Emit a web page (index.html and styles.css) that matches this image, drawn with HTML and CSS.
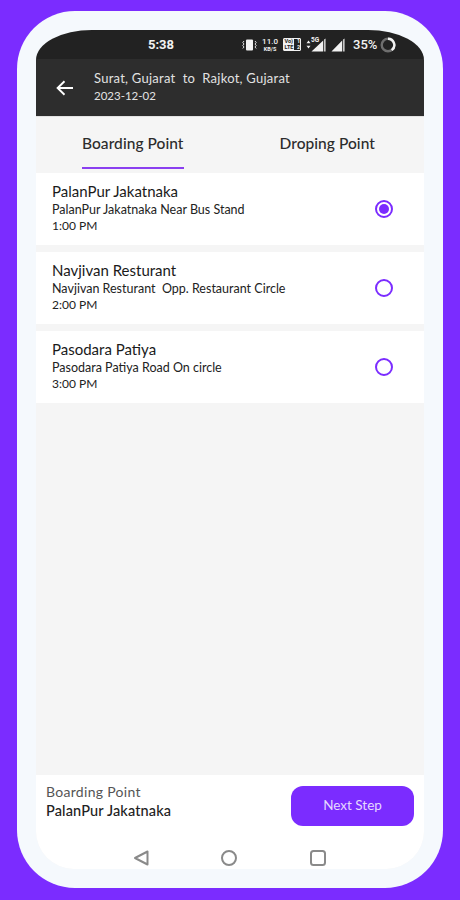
FILE: index.html
```html
<!DOCTYPE html>
<html lang="en">
<head>
    <meta charset="UTF-8">
    <meta name="viewport" content="width=device-width, initial-scale=1.0">
    <title>Boarding Point</title>
    <link rel="stylesheet" href="styles.css">
</head>
<body>
    <div class="phone">
        <div class="screen">
            <div class="status-bar">
                <span class="clock">5:38</span>
                <div class="status-icons">
                    <svg class="vibrate" width="15" height="12" viewBox="0 0 15 12">
                        <rect x="4" y="0.5" width="7" height="11" rx="1" fill="#f2f2f2"/>
                        <path d="M2 2 L0.8 3.5 L2 5 L0.8 6.5 L2 8 L0.8 9.5 M13 2 L14.2 3.5 L13 5 L14.2 6.5 L13 8 L14.2 9.5" fill="none" stroke="#f2f2f2" stroke-width="0.9"/>
                    </svg>
                    <div class="speed"><span>11.0</span><span class="speed-unit">KB/S</span></div>
                    <div class="volte">
                        <div class="volte-row"><span class="volte-box">Vo)</span><span>1</span></div>
                        <div class="volte-row"><span class="volte-box">LTE</span><span>2</span></div>
                    </div>
                    <div class="signal-one">
                        <svg width="5" height="9" viewBox="0 0 5 9">
                            <path d="M2.5 0.5 L4.5 3.2 H0.5 Z M2.5 8.5 L0.5 5.8 H4.5 Z" fill="#f2f2f2"/>
                        </svg>
                        <span class="five-g">5G</span>
                        <svg width="15" height="14" viewBox="0 0 15 14">
                            <path d="M12.2 2.6 V13.5 H0.5 Z M13.2 1.6 L14.5 0.5 V13.5 H13.2 Z" fill="#f2f2f2"/>
                        </svg>
                    </div>
                    <svg width="14" height="14" viewBox="0 0 14 14">
                        <path d="M11.2 2.6 V13.5 H0.5 Z M12.2 1.6 L13.5 0.5 V13.5 H12.2 Z" fill="#f2f2f2"/>
                    </svg>
                    <span class="battery-text">35%</span>
                    <svg class="battery-ring" width="16" height="16" viewBox="0 0 16 16">
                        <circle cx="8" cy="8" r="6.3" fill="none" stroke="#6e6e6e" stroke-width="2.4"/>
                        <path d="M8 1.7 A6.3 6.3 0 0 1 11.7 13.1" fill="none" stroke="#f2f2f2" stroke-width="2.4"/>
                    </svg>
                </div>
            </div>

            <div class="top-bar">
                <svg class="back" width="18" height="16" viewBox="0 0 18 16">
                    <path d="M17 8 H2 M8.5 1.2 L1.6 8 L8.5 14.8" fill="none" stroke="#fff" stroke-width="1.9"/>
                </svg>
                <div class="route">
                    <div class="route-name">Surat, Gujarat&nbsp; to&nbsp; Rajkot, Gujarat</div>
                    <div class="route-date">2023-12-02</div>
                </div>
            </div>

            <div class="tabs">
                <div class="tab active">Boarding Point</div>
                <div class="tab">Droping Point</div>
            </div>

            <div class="stops">
                <div class="stop">
                    <div class="stop-info">
                        <div class="stop-name">PalanPur Jakatnaka</div>
                        <div class="stop-detail">PalanPur Jakatnaka Near Bus Stand</div>
                        <div class="stop-time">1:00 PM</div>
                    </div>
                    <span class="radio checked"></span>
                </div>
                <div class="stop">
                    <div class="stop-info">
                        <div class="stop-name">Navjivan Resturant</div>
                        <div class="stop-detail">Navjivan Resturant&nbsp; Opp. Restaurant Circle</div>
                        <div class="stop-time">2:00 PM</div>
                    </div>
                    <span class="radio"></span>
                </div>
                <div class="stop">
                    <div class="stop-info">
                        <div class="stop-name">Pasodara Patiya</div>
                        <div class="stop-detail">Pasodara Patiya Road On circle</div>
                        <div class="stop-time">3:00 PM</div>
                    </div>
                    <span class="radio"></span>
                </div>
            </div>

            <div class="footer">
                <div class="summary">
                    <div class="summary-label">Boarding Point</div>
                    <div class="summary-value">PalanPur Jakatnaka</div>
                </div>
                <button class="next-btn" type="button">Next Step</button>
            </div>

            <div class="nav-bar">
                <svg width="18" height="18" viewBox="0 0 18 18">
                    <path d="M15.5 2.5 V15.5 L3 9 Z" fill="none" stroke="#8a8a8a" stroke-width="2" stroke-linejoin="round"/>
                </svg>
                <svg width="18" height="18" viewBox="0 0 18 18">
                    <circle cx="9" cy="9" r="7" fill="none" stroke="#8a8a8a" stroke-width="2"/>
                </svg>
                <svg width="18" height="18" viewBox="0 0 18 18">
                    <rect x="2" y="2" width="14" height="14" rx="2.5" fill="none" stroke="#8a8a8a" stroke-width="2"/>
                </svg>
            </div>
        </div>
    </div>
</body>
</html>
```

FILE: styles.css
```css
* {
    box-sizing: border-box;
}
body {
    margin: 0;
    height: 900px;
    overflow: hidden;
    background-color: #7b2cff;
    font-family: Lato, "Open Sans", sans-serif;
    padding: 11px 17px 12px;
}
.phone {
    height: 877px;
    padding: 19px;
    background-color: #f5f9fd;
    border-radius: 58px;
}
.screen {
    height: 839px;
    display: flex;
    flex-direction: column;
    background-color: #f5f5f5;
    border-radius: 56px 56px 38px 38px / 30px 30px 38px 38px;
    overflow: hidden;
}
.status-bar {
    height: 29px;
    flex: none;
    display: flex;
    align-items: center;
    background-color: #222;
    color: #f2f2f2;
    padding-left: 112px;
}
.clock {
    font-family: Roboto, sans-serif;
    font-size: 13px;
    font-weight: 700;
}
.status-icons {
    display: flex;
    align-items: center;
    margin-left: 68px;
    gap: 5px;
}
.speed {
    display: flex;
    flex-direction: column;
    align-items: center;
    font-family: Roboto, sans-serif;
    font-size: 8px;
    line-height: 9px;
    font-weight: 500;
    width: 16px;
}
.speed-unit {
    font-size: 5.5px;
    line-height: 7px;
    font-weight: 700;
}
.volte {
    display: flex;
    flex-direction: column;
    justify-content: center;
    width: 18px;
    height: 13px;
    font-family: Roboto, sans-serif;
    font-size: 5.5px;
    font-weight: 700;
    line-height: 5.5px;
    border: 1px solid #f2f2f2;
    border-radius: 1px;
}
.volte-row {
    display: flex;
    justify-content: space-between;
}
.volte-box {
    background-color: #f2f2f2;
    color: #222;
    padding: 0 0.5px;
}
.signal-one {
    display: flex;
    align-items: center;
    position: relative;
}
.five-g {
    position: absolute;
    left: 5px;
    top: -2px;
    font-family: Roboto, sans-serif;
    font-size: 6.5px;
    font-weight: 700;
}
.battery-text {
    font-family: Roboto, sans-serif;
    font-size: 13px;
    font-weight: 500;
    margin-left: 3px;
}
.battery-ring {
    margin-left: -2px;
}
.top-bar {
    height: 57px;
    flex: none;
    display: flex;
    align-items: center;
    background-color: #2d2d2d;
    padding-left: 20px;
    gap: 20px;
}
.route {
    margin-top: -2px;
}
.route-name {
    font-size: 13px;
    letter-spacing: 0.25px;
    line-height: 18px;
    color: #e2e2e2;
}
.route-date {
    font-size: 11.5px;
    line-height: 18px;
    color: #e2e2e2;
}
.tabs {
    height: 56px;
    flex: none;
    display: flex;
    border-top: 1px solid #e2e2e2;
    padding-left: 46px;
    gap: 96px;
}
.tab {
    font-size: 15.5px;
    font-weight: 500;
    letter-spacing: 0.05px;
    color: #2c2c2c;
    line-height: 52px;
    height: 52px;
}
.tab.active {
    border-bottom: 2px solid #8a3ff0;
}
.stops {
    flex: 1;
    display: flex;
    flex-direction: column;
    gap: 7px;
    padding-top: 1px;
}
.stop {
    height: 72px;
    display: flex;
    align-items: center;
    justify-content: space-between;
    background-color: #fff;
    padding: 0 31px 0 16px;
}
.stop-info {
    margin-bottom: 3px;
}
.stop-name {
    font-size: 15px;
    line-height: 18px;
    margin-bottom: 1px;
    color: #1a1a1a;
}
.stop-detail {
    font-size: 12.5px;
    line-height: 17px;
    color: #222;
}
.stop-time {
    font-size: 12px;
    line-height: 16px;
    color: #222;
}
.radio {
    width: 18px;
    height: 18px;
    border: 2px solid #7b2cff;
    border-radius: 50%;
    display: flex;
    align-items: center;
    justify-content: center;
}
.radio.checked::after {
    content: "";
    width: 10px;
    height: 10px;
    border-radius: 50%;
    background-color: #7b2cff;
}
.footer {
    height: 62px;
    flex: none;
    display: flex;
    align-items: center;
    justify-content: space-between;
    background-color: #fff;
    padding: 0 10px;
}
.summary {
    padding-bottom: 10px;
}
.summary-label {
    font-size: 14px;
    letter-spacing: 0.3px;
    line-height: 19px;
    color: #555;
}
.summary-value {
    font-size: 14.5px;
    font-weight: 500;
    letter-spacing: 0.15px;
    line-height: 19px;
    color: #222;
}
.next-btn {
    width: 123px;
    height: 40px;
    padding: 0 0 2px;
    background-color: #7b2cff;
    color: #e6d8ff;
    border: none;
    border-radius: 12px;
    font-family: inherit;
    font-size: 13.5px;
}
.nav-bar {
    height: 32px;
    flex: none;
    display: flex;
    align-items: center;
    justify-content: center;
    gap: 70.5px;
    background-color: #fff;
    padding: 10px 2px 0 0;
}
```
